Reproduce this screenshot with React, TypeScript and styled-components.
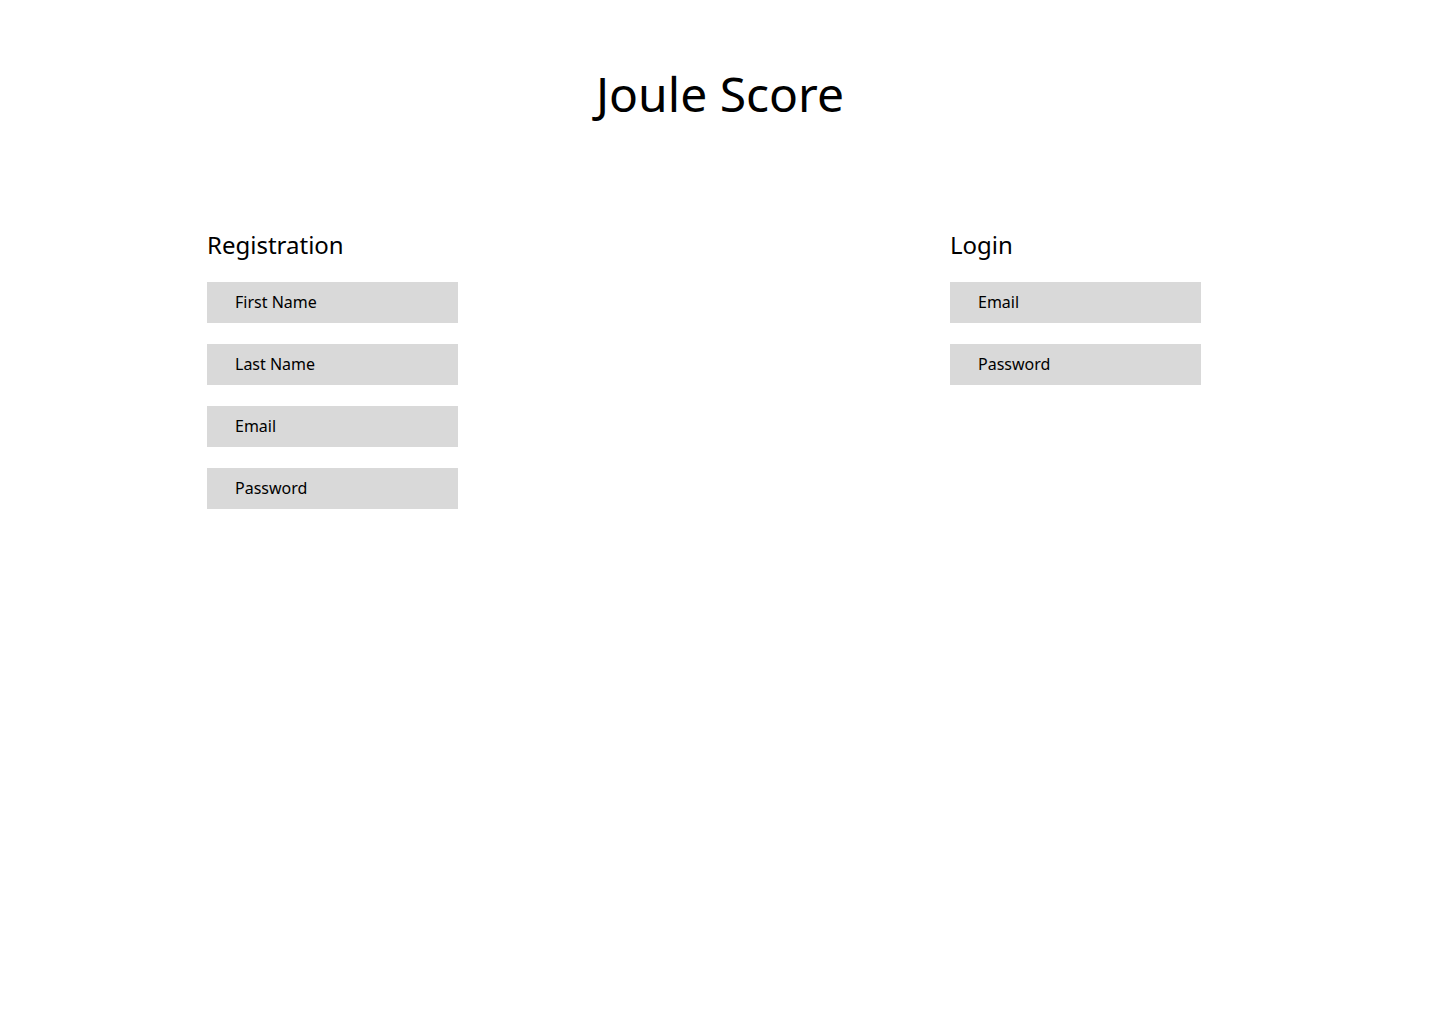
import React from 'react';
import styled, { createGlobalStyle } from 'styled-components';

const GlobalStyle = createGlobalStyle`
  html, body {
    margin: 0;
    padding: 0;
    background: #ffffff;
    font-family: "Noto Sans", "Open Sans", sans-serif;
    color: #000;
  }
`;

const Page = styled.div`
  width: 1440px;
  min-height: 1024px;
  box-sizing: border-box;
  padding-top: 61px;
`;

const Title = styled.h1`
  margin: 0;
  text-align: center;
  font-size: 48px;
  font-weight: 400;
  line-height: 65px;
`;

const Columns = styled.div`
  display: flex;
  gap: 492px;
  padding-left: 207px;
  margin-top: 102px;
`;

const Section = styled.section`
  width: 251px;
  display: flex;
  flex-direction: column;
`;

const Heading = styled.h2`
  margin: 0 0 21px;
  font-size: 24px;
  font-weight: 400;
  line-height: 33px;
`;

const Fields = styled.div`
  display: flex;
  flex-direction: column;
  gap: 21px;
`;

const Field = styled.input`
  box-sizing: border-box;
  width: 251px;
  height: 41px;
  border: none;
  outline: none;
  background: #d9d9d9;
  padding: 0 28px 2px;
  font-family: "Noto Sans", "Open Sans", sans-serif;
  font-size: 16px;
  color: #000;

  &::placeholder {
    color: #000;
    opacity: 1;
  }
`;

interface FormProps {
  title: string;
  fields: { name: string; label: string; type?: string }[];
}

function Form({ title, fields }: FormProps) {
  return (
    <Section>
      <Heading>{title}</Heading>
      <Fields>
        {fields.map(f => (
          <Field key={f.name} name={f.name} type={f.type || 'text'} placeholder={f.label} />
        ))}
      </Fields>
    </Section>
  );
}

export default function App() {
  return (
    <>
      <GlobalStyle />
      <Page>
        <Title>Joule Score</Title>
        <Columns>
          <Form
            title="Registration"
            fields={[
              { name: 'firstName', label: 'First Name' },
              { name: 'lastName', label: 'Last Name' },
              { name: 'email', label: 'Email', type: 'email' },
              { name: 'password', label: 'Password', type: 'password' },
            ]}
          />
          <Form
            title="Login"
            fields={[
              { name: 'loginEmail', label: 'Email', type: 'email' },
              { name: 'loginPassword', label: 'Password', type: 'password' },
            ]}
          />
        </Columns>
      </Page>
    </>
  );
}
